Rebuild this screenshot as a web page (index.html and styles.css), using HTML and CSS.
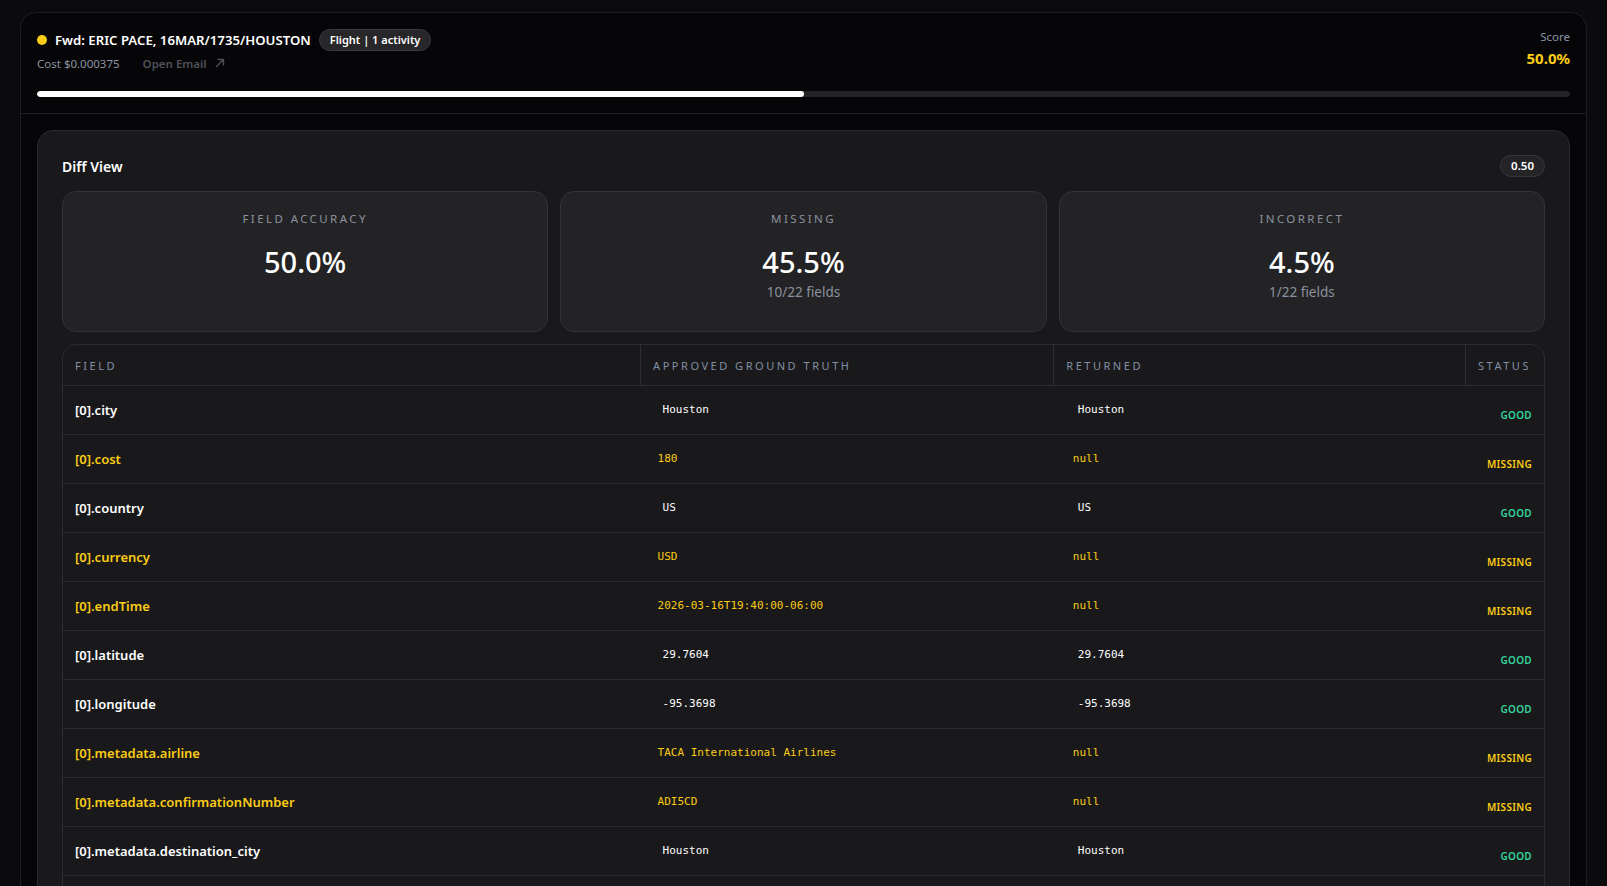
FILE: index.html
```html
<!DOCTYPE html>
<html lang="en">
<head>
    <meta charset="UTF-8">
    <meta name="viewport" content="width=device-width, initial-scale=1.0">
    <title>Diff View</title>
    <link rel="stylesheet" href="styles.css">
</head>
<body>

<div class="run-card">
    <div class="run-head">
        <div class="run-top">
            <div class="run-info">
                <div class="run-title">
                    <span class="dot"></span>
                    <span class="title-text">Fwd: ERIC PACE, 16MAR/1735/HOUSTON</span>
                    <span class="pill">Flight | 1 activity</span>
                </div>
                <div class="run-meta">
                    <span class="cost">Cost $0.000375</span>
                    <a class="open-link" href="#">Open Email
                        <svg width="10" height="10" viewBox="0 0 10 10" fill="none" stroke="currentColor" stroke-width="1.3" stroke-linecap="round" stroke-linejoin="round"><path d="M1.5 8.5 L8.5 1.5 M3 1.5 H8.5 V7"/></svg>
                    </a>
                </div>
            </div>
            <div class="score">
                <div class="score-label">Score</div>
                <div class="score-value">50.0%</div>
            </div>
        </div>
        <div class="progress"><div class="progress-fill" style="width: 50%"></div></div>
    </div>

    <div class="run-body">
        <div class="diff-card">
            <div class="diff-head">
                <h2>Diff View</h2>
                <span class="score-pill">0.50</span>
            </div>

            <div class="stats">
                <div class="stat">
                    <div class="stat-label">Field Accuracy</div>
                    <div class="stat-value">50.0%</div>
                </div>
                <div class="stat">
                    <div class="stat-label">Missing</div>
                    <div class="stat-value">45.5%</div>
                    <div class="stat-sub">10/22 fields</div>
                </div>
                <div class="stat">
                    <div class="stat-label">Incorrect</div>
                    <div class="stat-value">4.5%</div>
                    <div class="stat-sub">1/22 fields</div>
                </div>
            </div>

            <div class="table-wrap">
                <table class="diff-table">
                    <colgroup>
                        <col class="col-field">
                        <col class="col-truth">
                        <col class="col-returned">
                        <col class="col-status">
                    </colgroup>
                    <thead>
                        <tr>
                            <th>Field</th>
                            <th>Approved Ground Truth</th>
                            <th>Returned</th>
                            <th>Status</th>
                        </tr>
                    </thead>
                    <tbody id="rows"></tbody>
                </table>
            </div>
        </div>
    </div>
</div>

<script>
    const rows = [
        ['[0].city', 'Houston', 'Houston', 'good'],
        ['[0].cost', '180', 'null', 'missing'],
        ['[0].country', 'US', 'US', 'good'],
        ['[0].currency', 'USD', 'null', 'missing'],
        ['[0].endTime', '2026-03-16T19:40:00-06:00', 'null', 'missing'],
        ['[0].latitude', '29.7604', '29.7604', 'good'],
        ['[0].longitude', '-95.3698', '-95.3698', 'good'],
        ['[0].metadata.airline', 'TACA International Airlines', 'null', 'missing'],
        ['[0].metadata.confirmationNumber', 'ADI5CD', 'null', 'missing'],
        ['[0].metadata.destination_city', 'Houston', 'Houston', 'good'],
        ['[0].metadata.destination_country', 'US', 'US', 'good'],
        ['[0].metadata.flightNumber', 'TA 512', 'null', 'missing']
    ];

    document.getElementById('rows').innerHTML = rows.map(([field, truth, returned, status]) => `
        <tr class="row-${status}">
            <td class="cell-field">${field}</td>
            <td class="cell-truth"><code>${truth}</code></td>
            <td class="cell-returned"><code>${returned}</code></td>
            <td class="cell-status"><span class="status">${status.toUpperCase()}</span></td>
        </tr>
    `).join('');
</script>

</body>
</html>
```

FILE: styles.css
```css
body {
    font-family: "Noto Sans", "Open Sans", sans-serif;
    margin: 0;
    padding: 12px 20px 20px;
    background-color: #0b0b0d;
    color: #f4f4f5;
}
.run-card {
    background-color: #060608;
    border: 1px solid #1e1e21;
    border-radius: 16px;
}
.run-head {
    padding: 16px 16px 16px;
    border-bottom: 1px solid #1e1e21;
}
.run-top {
    display: flex;
    justify-content: space-between;
    align-items: flex-start;
}
.run-title {
    display: flex;
    align-items: center;
    height: 22px;
}
.dot {
    width: 10px;
    height: 10px;
    border-radius: 50%;
    background-color: #facc15;
    margin-right: 8px;
}
.title-text {
    font-size: 13.2px;
    font-weight: 600;
    color: #fff;
}
.pill {
    margin-left: 8px;
    height: 20px;
    line-height: 20px;
    padding: 0 10px;
    border-radius: 999px;
    background-color: #27272a;
    border: 1px solid #3a3a3e;
    font-size: 11px;
    font-weight: 600;
    color: #fff;
}
.run-meta {
    display: flex;
    align-items: center;
    margin-top: 4px;
    height: 16px;
    font-size: 11.5px;
}
.cost {
    color: #8c93a0;
}
.open-link {
    margin-left: 23px;
    color: #505157;
    font-weight: 600;
    text-decoration: none;
    display: flex;
    align-items: center;
    gap: 8px;
}
.score {
    text-align: right;
}
.score-label {
    font-size: 11.5px;
    line-height: 16px;
    color: #8b95a7;
}
.score-value {
    margin-top: 3px;
    font-size: 15px;
    line-height: 20px;
    font-weight: 700;
    color: #facc15;
}
.progress {
    margin-top: 20px;
    height: 6px;
    border-radius: 999px;
    background-color: #232326;
    overflow: hidden;
}
.progress-fill {
    height: 100%;
    background-color: #fff;
    border-radius: 999px;
}
.run-body {
    padding: 16px;
}
.diff-card {
    background-color: #19191b;
    border: 1px solid #2a2a2d;
    border-radius: 16px;
    padding: 24px 24px 24px;
}
.diff-head {
    display: flex;
    justify-content: space-between;
    align-items: center;
    height: 22px;
}
h2 {
    margin: 0;
    font-size: 14px;
    font-weight: 600;
    color: #fff;
}
.score-pill {
    height: 20px;
    line-height: 20px;
    padding: 0 10px;
    border-radius: 999px;
    background-color: #242427;
    border: 1px solid #38383c;
    font-size: 11.5px;
    font-weight: 600;
    color: #fff;
}
.stats {
    display: grid;
    grid-template-columns: repeat(3, 1fr);
    gap: 12px;
    margin-top: 14px;
}
.stat {
    background-color: #232325;
    border: 1px solid #333336;
    border-radius: 14px;
    padding: 19px 20px 28px;
    text-align: center;
    height: 92px;
}
.stat-label {
    font-size: 11.5px;
    line-height: 16px;
    letter-spacing: 0.21em;
    text-transform: uppercase;
    color: #8b929f;
}
.stat-value {
    margin-top: 15px;
    font-size: 29px;
    line-height: 40px;
    font-weight: 500;
    color: #fff;
}
.stat-sub {
    margin-top: 1px;
    font-size: 13.5px;
    line-height: 18px;
    color: #8b929f;
}
.table-wrap {
    margin-top: 12px;
    border: 1px solid #2c2c2f;
    border-radius: 14px;
    overflow: hidden;
}
.diff-table {
    width: 100%;
    border-collapse: collapse;
    table-layout: fixed;
}
.col-field { width: 39%; }
.col-truth { width: 27.9%; }
.col-returned { width: 27.8%; }
.diff-table th {
    height: 40px;
    padding: 0 12px;
    text-align: left;
    font-size: 11px;
    font-weight: 400;
    letter-spacing: 0.23em;
    text-transform: uppercase;
    color: #8390a3;
    border-right: 1px solid #2e2e32;
}
.diff-table th:last-child {
    border-right: none;
}
.diff-table td {
    box-sizing: border-box;
    height: 49px;
    padding: 0 12px;
    border-top: 1px solid #2c2c2f;
    vertical-align: middle;
}
.cell-field {
    font-size: 13px;
    font-weight: 600;
    color: #fff;
}
.cell-truth,
.cell-returned {
    padding-bottom: 7px !important;
}
.cell-truth {
    padding-left: 17px !important;
}
.cell-returned {
    padding-left: 19px !important;
}
code {
    font-family: "DejaVu Sans Mono", "Liberation Mono", monospace;
    font-size: 11px;
    color: #fff;
}
.row-good code {
    padding-left: 5px;
}
.cell-status {
    text-align: right;
    padding-top: 5px !important;
}
.status {
    font-size: 10px;
    font-weight: 600;
    letter-spacing: 0.03em;
}
.row-good .status {
    color: #34d399;
}
.row-missing .cell-field,
.row-missing code,
.row-missing .status {
    color: #facc15;
}
```
